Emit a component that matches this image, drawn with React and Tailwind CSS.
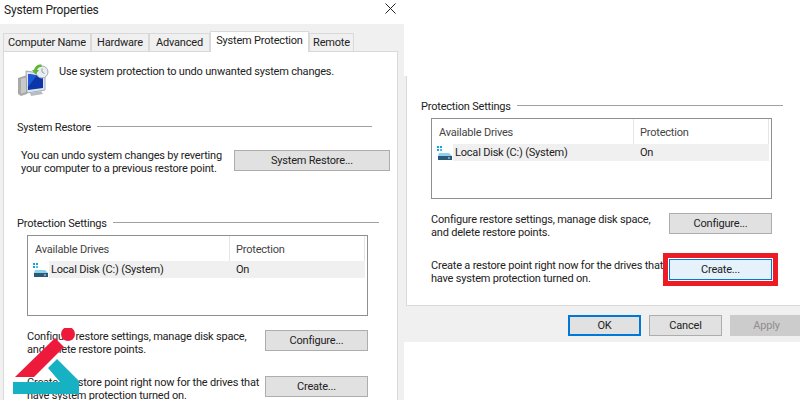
import React from 'react';

function SystemIcon() {
  return (
    <svg width="32" height="34" viewBox="0 0 32 34" className="shrink-0">
      <path d="M1 15 L10 12 L10 31 L4 33 L1 31 Z" fill="#a9a9a9" />
      <path d="M4 16 L9 14.5 L9 29 L4 30.5 Z" fill="#c9c9c9" />
      <path d="M9 8 L28 11 L28 27 L10 30 Z" fill="#dfe6ee" stroke="#8d9aa8" strokeWidth="0.8" />
      <path d="M11 11 L26 13 L26 25 L11 27 Z" fill="#0b35a8" />
      <path d="M11 11 L20 12.2 L11 24 Z" fill="#1f58d6" />
      <path d="M13 30 L24 28 L26 31 L14 33 Z" fill="#b7bcc2" />
      <circle cx="25" cy="9" r="6" fill="#e8edf2" stroke="#a4adb6" strokeWidth="1" />
      <path d="M25 5.5 V9 L27.5 10.5" fill="none" stroke="#7d8893" strokeWidth="0.8" />
      <path d="M24.5 1.5 A6.5 6.5 0 0 0 17 7 L15 7 L18.5 11.5 L22 7 L20 7 A4 4 0 0 1 24.5 4 Z" fill="#5cb531" />
    </svg>
  );
}

function DriveIcon() {
  return (
    <svg width="15" height="14" viewBox="0 0 15 14" className="shrink-0">
      <rect x="0" y="0" width="2" height="2" fill="#19a3dc" />
      <rect x="3" y="0" width="2" height="2" fill="#19a3dc" />
      <rect x="0" y="3" width="2" height="2" fill="#19a3dc" />
      <rect x="3" y="3" width="2" height="2" fill="#4fc1ea" />
      <path d="M2 7 L12 7 L15 10 L1 10 Z" fill="#8fd0ea" />
      <rect x="1" y="10" width="14" height="4" fill="#2b5a78" />
      <rect x="11" y="11.5" width="2" height="1" fill="#cfe6f2" />
    </svg>
  );
}

function Logo() {
  return (
    <svg width="80" height="72" viewBox="0 0 80 72" className="absolute left-0 top-[328px]">
      <path d="M15 49 L55 10 L64 19 L34 49 Z" fill="#ee1a3c" />
      <circle cx="68" cy="6" r="7" fill="#ee1a3c" />
      <path d="M13 54 L60 54 L48 40 L57 31 L79 53 L79 66 L13 66 Z" fill="#16b2c4" />
    </svg>
  );
}

function Btn({ className = '', children }) {
  return (
    <button className={`h-[21px] shrink-0 border border-[#adadad] bg-[#e1e1e1] pt-px text-center text-[#222] ${className}`}>
      {children}
    </button>
  );
}

function GroupLabel({ title }) {
  return (
    <div className="flex h-4 items-center gap-[6px]">
      <span className="pt-[2px] whitespace-nowrap">{title}</span>
      <div className="mb-[2px] h-px flex-1 bg-[#a0a0a0]" />
    </div>
  );
}

function ProtectionGroup({ highlight }) {
  return (
    <div className="w-[362px]">
      <GroupLabel title="Protection Settings" />
      <div className="ml-[10px] mt-1 h-[81px] w-[341px] border border-[#8f8f8f] bg-white">
        <div className="flex h-[25px] items-center text-[#444]">
          <div className="flex h-full w-[202px] items-center border-r border-[#e5e5e5] pl-[7px] pt-[3px]">Available Drives</div>
          <div className="flex h-full w-[135px] items-center border-r border-[#e5e5e5] pl-[6px] pt-[3px]">Protection</div>
        </div>
        <div className="flex h-[17px] items-center pl-[5px]">
          <DriveIcon />
          <div className="ml-px flex h-full w-[316px] items-center bg-[#f0f0f0] pt-px">
            <span className="w-[187px] pl-[2px]">Local Disk (C:) (System)</span>
            <span>On</span>
          </div>
        </div>
      </div>
      <div className="ml-[10px] mt-[14px] flex h-[21px] w-[341px] items-center justify-between">
        <p className="mt-[5px] min-w-0 flex-1 whitespace-nowrap leading-[13px]">Configure restore settings, manage disk space,<br />and delete restore points.</p>
        <Btn className="w-[103px]">Configure...</Btn>
      </div>
      <div className="ml-[10px] mt-[25px] flex h-[21px] w-[341px] items-center justify-between">
        <p className="mt-[5px] min-w-0 flex-1 whitespace-nowrap leading-[13px]">Create a restore point right now for the drives that<br />have system protection turned on.</p>
        {highlight ? (
          <Btn className="w-[103px] !border-[#0078d7] !bg-[#e5f1fb] outline-[5px] outline-offset-1 outline-[#ed1c24] outline-solid">Create...</Btn>
        ) : (
          <Btn className="w-[103px]">Create...</Btn>
        )}
      </div>
    </div>
  );
}

const tabs = [
  { name: 'Computer Name', w: 'w-[88px]' },
  { name: 'Hardware', w: 'w-[58px]' },
  { name: 'Advanced', w: 'w-[61px]' },
];

export default function App() {
  return (
    <div className="relative flex h-[400px] w-[800px] overflow-hidden bg-white font-['Roboto',sans-serif] text-[11px] tracking-[-0.2px] text-[#222]">
      {/* left dialog */}
      <div className="flex w-[404px] shrink-0 flex-col">
        <div className="flex h-6 shrink-0 items-center justify-between pl-1 pr-2">
          <span className="pb-[5px] text-[12px]">System Properties</span>
          <svg width="11" height="11" viewBox="0 0 11 11" className="mb-2">
            <path d="M0.5 0.5 L10.5 10.5 M10.5 0.5 L0.5 10.5" stroke="#222" strokeWidth="1" />
          </svg>
        </div>
        <div className="min-h-0 flex-1 bg-[#f0f0f0] pl-[3px]">
          <div className="flex h-[27px] items-end">
            {tabs.map(t => (
              <div key={t.name} className={`flex h-[18px] items-center justify-center whitespace-nowrap border border-b-0 border-[#d9d9d9] pt-px ${t.w}`}>{t.name}</div>
            ))}
            <div className="relative z-10 -mb-px flex h-[21px] w-[99px] items-center justify-center whitespace-nowrap border border-b-0 border-[#d9d9d9] bg-white pb-[2px]">System Protection</div>
            <div className="flex h-[18px] w-[45px] items-center justify-center whitespace-nowrap border border-b-0 border-[#d9d9d9] pt-px">Remote</div>
          </div>
          <div className="h-[349px] w-[395px] border border-b-0 border-[#d9d9d9] bg-white pl-[13px] pt-[11px]">
            <div className="flex h-[33px] items-start gap-[10px]">
              <SystemIcon />
              <span className="mt-px whitespace-nowrap">Use system protection to undo unwanted system changes.</span>
            </div>
            <div className="mt-[23px] w-[355px]">
              <GroupLabel title="System Restore" />
            </div>
            <div className="ml-1 mt-[15px] flex h-[21px] w-[369px] items-center justify-between">
              <p className="mt-[2px] min-w-0 flex-1 whitespace-nowrap leading-[13px]">You can undo system changes by reverting<br />your computer to a previous restore point.</p>
              <Btn className="w-[156px]">System Restore...</Btn>
            </div>
            <div className="mt-[44px]">
              <ProtectionGroup />
            </div>
          </div>
        </div>
      </div>

      {/* right dialog, second capture */}
      <div className="flex flex-1 flex-col pt-[76px]">
        <div className="bg-[#f0f0f0] pl-[2px]">
          <div className="h-[230px] border-b border-l border-[#d9d9d9] bg-white pl-[14px] pt-[22px]">
            <ProtectionGroup highlight />
          </div>
        </div>
        <div className="flex h-9 gap-2 bg-[#f0f0f0] pl-[164px] pt-[9px]">
          <Btn className="w-[73px] border-2 !border-[#0078d7]">OK</Btn>
          <Btn className="w-[73px]">Cancel</Btn>
          <Btn className="w-[73px] !border-[#cccccc] !bg-[#cccccc] !text-[#8f8f8f]">Apply</Btn>
        </div>
      </div>

      <Logo />
    </div>
  );
}
